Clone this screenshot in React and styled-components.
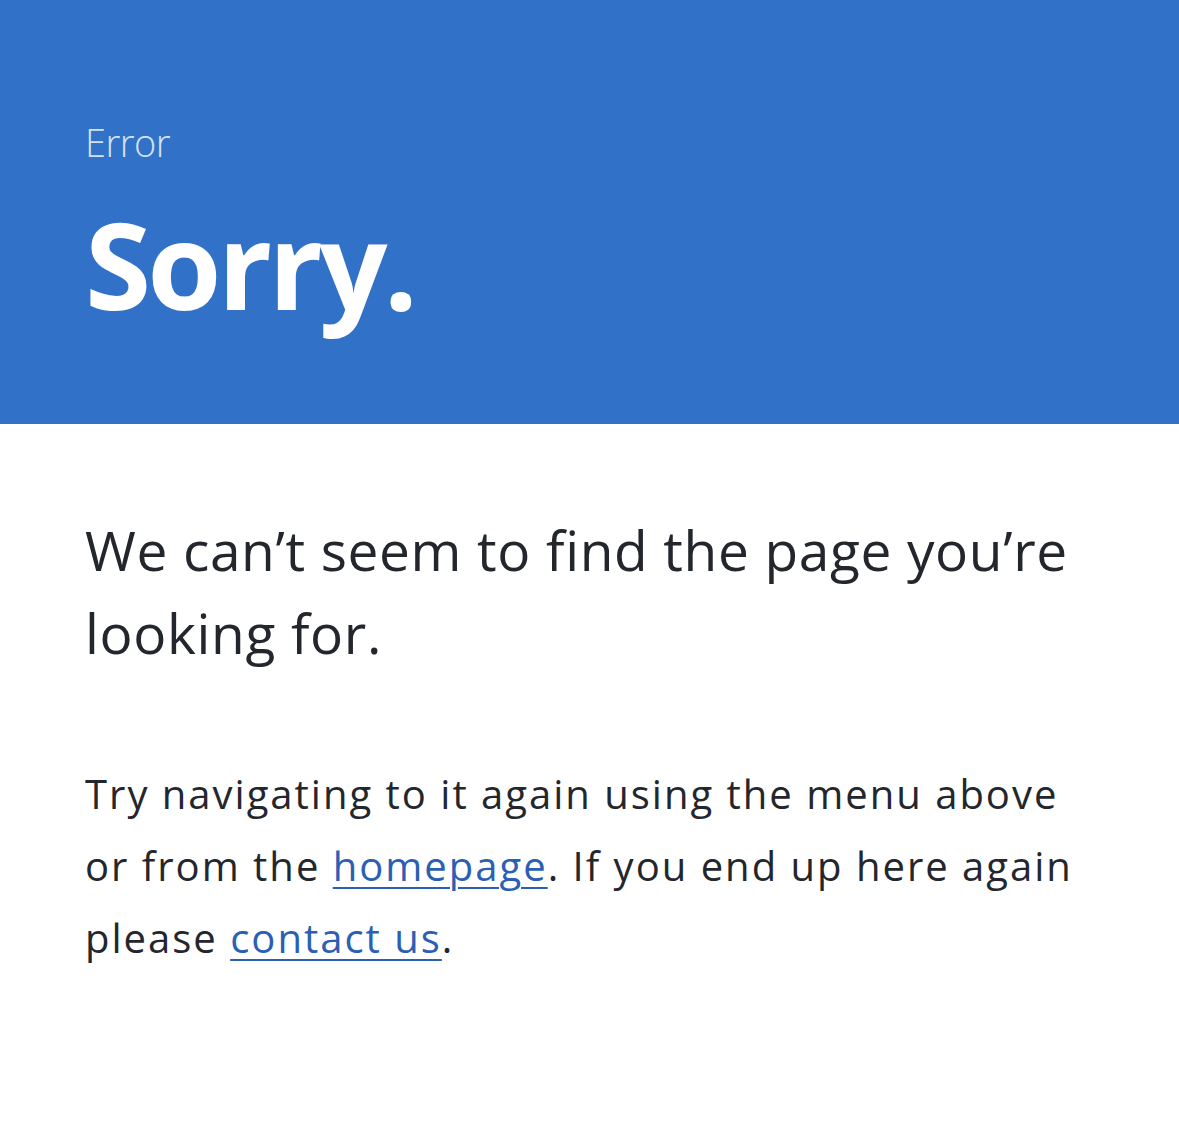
import React from "react";
import styled, { createGlobalStyle } from "styled-components";

const Global = createGlobalStyle`
  html, body { margin: 0; padding: 0; background: #ffffff; }
  body { font-family: "Open Sans", "Noto Sans", sans-serif; -webkit-font-smoothing: antialiased; }
`;

const Page = styled.main`
  width: 1179px;
  min-height: 1129px;
  background: #ffffff;
`;

const Hero = styled.header`
  box-sizing: border-box;
  height: 424px;
  background: #3171c7;
  padding: 116px 0 0 85px;
  display: flex;
  flex-direction: column;
`;

const Eyebrow = styled.div`
  font-size: 38px;
  font-weight: 300;
  line-height: 52px;
  color: #d3e2f6;
  letter-spacing: -0.5px;
`;

const Title = styled.h1`
  margin: 31px 0 0;
  font-size: 120px;
  font-weight: 700;
  line-height: 130px;
  color: #ffffff;
  letter-spacing: -3.8px;
`;

const Body = styled.section`
  box-sizing: border-box;
  padding: 84px 82px 0 85px;
  width: 1179px;
  color: #23272d;
`;

const Lead = styled.p`
  margin: 0;
  font-size: 55px;
  font-weight: 400;
  line-height: 83px;
  letter-spacing: 0.65px;
`;

const Text = styled.p`
  margin: 84px 0 0;
  font-size: 40px;
  font-weight: 400;
  line-height: 72px;
  letter-spacing: 2px;
`;

const Link = styled.a`
  color: #2b5fb4;
  text-decoration: underline;
  text-decoration-thickness: 2px;
  text-underline-offset: 6px;
`;

export default function App() {
  return (
    <Page>
      <Global />
      <Hero>
        <Eyebrow>Error</Eyebrow>
        <Title>Sorry.</Title>
      </Hero>
      <Body>
        <Lead>We can’t seem to find the page you’re looking for.</Lead>
        <Text>
          Try navigating to it again using the menu above or from the{" "}
          <Link href="#">homepage</Link>. If you end up here again please{" "}
          <Link href="#">contact us</Link>.
        </Text>
      </Body>
    </Page>
  );
}
